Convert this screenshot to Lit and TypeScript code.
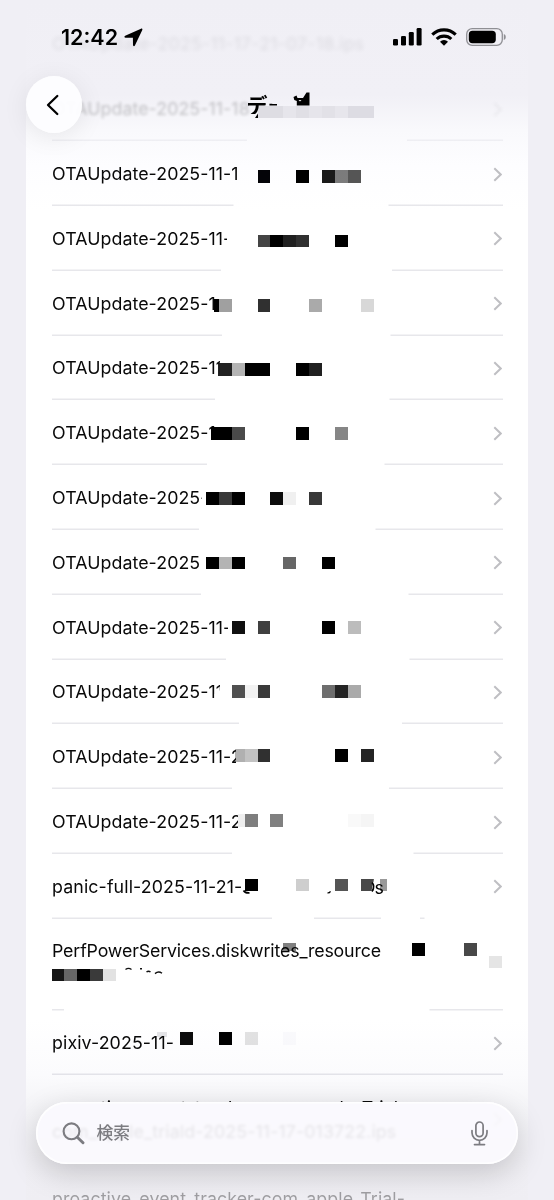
import { LitElement, html, svg, css } from "lit";
import { customElement, property } from "lit/decorators.js";

const CELL = 12.88;

type Tile = [col: number, y: number, color: string, x0?: number, h?: number, x1?: number];
interface Row {
  lines: string[];
  clip?: number;
  gaps?: [number, number][];
  tiles?: Tile[];
  extra?: unknown;
  state?: string;
  tracking?: number;
  chevron?: boolean;
}

const ota = (text: string, clip: number, gap: [number, number], y: number, tiles: [number, string, number?][]): Row => ({
  lines: [text],
  clip,
  gaps: [gap],
  tiles: tiles.map(([c, color, x0]) => [c, y, color, x0] as Tile),
});

const ROWS: Row[] = [
  { lines: ["OTAUpdate-2025-11-17-21-07-18.ips"], state: "ghost", chevron: false, tracking: 0.2 },
  { lines: ["OTAUpdate-2025-11-18"], state: "soft", clip: 250, gaps: [[247, 407]] },
  ota("OTAUpdate-2025-11-1", 242, [233.5, 388.5], 29, [[20, "#040408"], [23, "#000"], [25, "#1a1a1a"], [26, "#7c7c7c"], [27, "#555"]]),
  ota("OTAUpdate-2025-11-", 227, [221, 392], 28.6, [[20, "#444"], [21, "#000"], [22, "#202020"], [23, "#303030"], [26, "#000"]]),
  ota("OTAUpdate-2025-11", 215, [222, 390.5], 28.2, [[16, "#000", 213.5], [17, "#a0a0a0"], [20, "#303030"], [24, "#aaa"], [28, "#d8d8d8"]]),
  ota("OTAUpdate-2025-11", 220, [215, 389.5], 27.8, [[17, "#222", 218], [18, "#b4b4b4"], [19, "#000"], [20, "#000"], [23, "#000"], [24, "#202020"]]),
  ota("OTAUpdate-2025-1", 215, [207, 384.5], 27.4, [[16, "#000", 211.3], [17, "#000"], [18, "#4a4a4a"], [23, "#000"], [26, "#868686"]]),
  ota("OTAUpdate-2025-", 202, [199, 375.5], 27, [[16, "#000"], [17, "#383838"], [18, "#000"], [21, "#0c0c0c"], [22, "#f0f0f0"], [24, "#383838"]]),
  ota("OTAUpdate-2025", 199, [201, 408.5], 26.6, [[16, "#000"], [17, "#b4b4b4"], [18, "#000"], [22, "#666"], [25, "#000"]]),
  ota("OTAUpdate-2025-11-", 228, [226, 409.5], 26.2, [[18, "#101010"], [20, "#404040"], [25, "#000"], [27, "#bcbcbc"]]),
  {
    ...ota("OTAUpdate-2025-11", 220, [239, 402], 25.8, [[18, "#505050"], [19, "#f2f2f2"], [20, "#3a3a3a"], [25, "#6e6e6e"], [26, "#242424"], [27, "#aaa"]]),
    extra: svg`<path d="M217 31.500h5v11h-7.500v-7z" fill="#fff"/>`,
  },
  ota("OTAUpdate-2025-11-2", 236, [232, 389], 25.4, [[18, "#b0b0b0", 234.8], [19, "#c2c2c2"], [20, "#303030"], [26, "#000"], [28, "#242424"]]),
  ota("OTAUpdate-2025-11-2", 238, [232, 413.5], 25, [[18, "#eee", 237.5], [19, "#7e7e7e"], [21, "#808080"], [27, "#f9f9f9"], [28, "#f5f5f5"]]),
  {
    lines: ["panic-full-2025-11-21-"],
    tracking: 0.12,
    gaps: [[272, 314], [381, 420], [424.5, 503]],
    tiles: [[19, 24.5, "#000"], [23, 24.5, "#cecece"], [26, 24.5, "#555"], [28, 24.5, "#484848"], [29, 24.5, "#999", 380.2, 12.9, 386.5]],
    extra: svg`
      <path d="M243.500 36.500q1.800 2.800 6 2.400" fill="none" stroke="#000" stroke-width="1.700"/>
      <path d="M327.500 38.800q2 .2 3-1.500" fill="none" stroke="#000" stroke-width="1.300"/>
      <path d="M373.500 24.500l-2 13h2v-2q3.500-4 0-7.500z" fill="#fff"/>
      <path d="M372 28.500q3.400 3.500 0 9" fill="none" stroke="#000" stroke-width="1.700"/>
      <text x="374.500" y="39.600" class="bit">s</text>`,
  },
  {
    lines: ["PerfPowerServices.diskwrites_resource", ""],
    state: "raised",
    tracking: -0.155,
    chevron: false,
    gaps: [[64, 429.5]],
    tiles: [
      [22, 23.7, "#808080", 283.4, 8.2], [32, 23.7, "#000"], [36, 23.7, "#484848"], [38, 36.6, "#e5e5e5"],
      [4, 49.5, "#161616"], [5, 49.5, "#666"], [6, 49.5, "#000"], [7, 49.5, "#3a3a3a"], [8, 49.5, "#e2e2e2"],
    ],
    extra: svg`<path d="M125.500 50.500q3-2.300 6 0M140 49.700h2M146.500 52.900q2-1.200 4 0M155 54.600q3.500-3 7-.3" fill="none" stroke="#111" stroke-width="1.400"/>`,
  },
  {
    lines: ["pixiv-2025-11-"],
    tracking: 0.1,
    tiles: [[12, 22.4, "#e4e4e6", 157, 4.4], [14, 22.4, "#0c0c0c"], [17, 22.4, "#000"], [19, 22.4, "#e2e2e2"], [22, 22.4, "#fafafc"]],
  },
  { lines: ["proactive_event_tracker-com_apple_Trial-", "com_apple_triald-2025-11-17-013722.ips"], state: "under", tracking: 0.12 },
  { lines: ["proactive_event_tracker-com_apple_Trial-", ""], state: "tail", chevron: false, tracking: 0.08 },
];

@customElement("log-row")
class LogRow extends LitElement {
  @property({ attribute: false }) row!: Row;

  static styles = css`
    :host { display: block; position: relative; }
    .row { display: flex; align-items: center; min-height: 64.8px; box-sizing: border-box; padding: 1.400px 26.500px 0 26px; }
    .row.double { min-height: 91.4px; }
    .label { flex: 1; font-size: 17.800px; line-height: 24px; white-space: nowrap; color: #080808; }
    .line { height: 24px; overflow: hidden; }
    .chev { width: 9px; height: 15px; flex: none; }
    .overlay { position: absolute; left: -26px; top: 0; width: 554px; height: 100%; overflow: visible; pointer-events: none; }
    .overlay rect { mix-blend-mode: multiply; }
    .bit { font: 17.800px Inter, sans-serif; }
    .soft { filter: blur(1.700px); opacity: .22; }
    .ghost { filter: blur(2px); opacity: .085; }
    .row.raised { padding-top: 0; padding-bottom: 2px; }
    .row.under { padding-top: 0; padding-bottom: 1px; }
    .under .line:first-child { clip-path: inset(0 0 17px 0); }
    .row.tail { opacity: .34; padding-top: 0; padding-bottom: 2px; }
  `;

  render() {
    const r = this.row;
    const double = r.lines.length > 1;
    const h = double ? 91.4 : 64.8;
    // Separator pieces between the erased spans.
    const pieces: [number, number][] = [];
    let x = 52;
    for (const [a, b] of r.gaps ?? []) {
      pieces.push([x, a]);
      x = b;
    }
    pieces.push([x, 503]);
    const bare = r.state === "ghost" || r.state === "under";
    return html`
      <div class="row ${double ? "double" : ""} ${r.state ?? ""}">
        <div class="label" style="letter-spacing:${r.tracking ?? 0.07}px">
          ${r.lines.map((t) => html`<div class="line" style=${r.clip ? `width:${r.clip - 52}px` : ""}>${t}</div>`)}
        </div>
        ${r.chevron === false
          ? ""
          : html`<svg class="chev" viewBox="0 0 9 15"><path d="M1.300 1.300 7.700 7.500l-6.400 6.200" fill="none" stroke="#bfbfc3" stroke-width="2"/></svg>`}
      </div>
      <svg class="overlay">
        ${bare ? "" : pieces.map(([a, b]) => svg`<rect x=${a} y=${h - 1.2} width=${Math.max(0, b - a)} height="1.200" fill=${r.state === "soft" ? "#f0f0f3" : "#e2e2e6"}/>`)}
        ${(r.tiles ?? []).map(([c, y, color, x0, th, x1]) => {
          const left = x0 ?? c * CELL;
          return svg`<rect x=${left} y=${y} width=${(x1 ?? (c + 1) * CELL) - left} height=${th ?? CELL} fill=${color} shape-rendering="crispEdges"/>`;
        })}
        ${r.extra ?? ""}
      </svg>
    `;
  }
}

@customElement("app-root")
class AppRoot extends LitElement {
  static styles = css`
    :host { display: block; width: 554px; height: 1200px; position: relative; overflow: hidden; background: #f0eff5; font-family: Inter, "Noto Sans CJK JP", sans-serif; color: #000; }
    .card { margin: 0 26px; padding-top: 11.4px; background: linear-gradient(#f0eff5 0, #f1f0f6 95px, #f9f9fc 130px, #fdfdff 165px, #fff 210px, #fff 1020px, #fbfbfd 1075px, #f4f4f7 1110px, #f0eff4 1160px, #efeef3 1200px); }
    .top { position: absolute; inset: 0 0 auto 0; }
    .status { display: flex; height: 74px; box-sizing: border-box; align-items: center; justify-content: space-between; padding: 0 48.500px 0 61px; }
    .time { display: flex; align-items: center; gap: 6px; font-weight: 600; font-size: 21.500px; letter-spacing: 0; }
    .signals { display: flex; align-items: center; gap: 9px; }
    .nav { display: flex; height: 61px; align-items: center; padding-left: 26px; }
    .back { width: 56px; height: 57px; border-radius: 50%; background: rgba(253, 253, 255, .96); box-shadow: 0 4px 26px rgba(0, 0, 0, .08), inset 0 0 2px #fff; display: grid; place-items: center; }
    .back svg { margin-right: 3px; }
    .title { margin-left: 165px; width: 130px; height: 30px; overflow: visible; }
    .title-text { font: 700 21px "Noto Sans CJK JP", sans-serif; }
    .search { position: absolute; left: 36px; right: 36px; bottom: 36px; height: 62px; box-sizing: border-box; padding: 0 29px 0 25.500px; display: flex; align-items: center; border-radius: 31px; background: rgba(251, 250, 254, .91); backdrop-filter: blur(1.500px); box-shadow: 0 9px 30px rgba(0, 0, 0, .18), inset 0 0 0 1.500px rgba(255, 255, 255, .85); }
    .hint { flex: 1; margin-left: 12px; font: 500 16.800px "Noto Sans CJK JP", sans-serif; color: #7c7c81; padding-bottom: 3px; }
  `;

  render() {
    return html`
      <main class="card">${ROWS.map((r) => html`<log-row .row=${r}></log-row>`)}</main>
      <header class="top">
        <div class="status">
          <div class="time">
            <span>12:42</span>
            <svg width="19" height="19" viewBox="0 0 19 19"><path d="M17 .7 1.200 7.800c-1.200.6-.9 1.900.4 1.900l7.300.1.1 7.300c0 1.300 1.400 1.600 1.900.4L18.300 2C18.700 1 18 .3 17 .7z"/></svg>
          </div>
          <div class="signals">
            <svg width="29" height="18" viewBox="0 0 29 18"><rect x="0" y="11" width="5" height="6.500" rx="1.300"/><rect x="8" y="8" width="5" height="9.500" rx="1.300"/><rect x="15.800" y="4" width="5" height="13.500" rx="1.300"/><rect x="23.600" y="0" width="5" height="17.500" rx="1.300"/></svg>
            <svg width="26" height="18" viewBox="0 0 26 18"><g fill="none" stroke="#000" stroke-width="3.100"><path d="M1.300 6.600a16.800 16.800 0 0 1 23.400 0"/><path d="M5.700 11a10.600 10.600 0 0 1 14.600 0"/></g><path d="M13 17.700 9 13.700a5.800 5.800 0 0 1 8 0z"/></svg>
            <svg width="40" height="18" viewBox="0 0 40 18"><rect x=".7" y=".7" width="35.600" height="16.600" rx="5.500" fill="none" stroke="#8f8f94" stroke-width="1.300"/><rect x="2.800" y="2.800" width="27" height="12.400" rx="3.700"/><path d="M37.800 6v6q2-.6 2-3t-2-3z" fill="#8f8f94"/></svg>
          </div>
        </div>
        <div class="nav">
          <div class="back"><svg width="14" height="22" viewBox="0 0 14 22"><path d="M11.300 2 2 11l9.300 9" fill="none" stroke="#000" stroke-width="2.300" stroke-linecap="round" stroke-linejoin="round"/></svg></div>
          <svg class="title" viewBox="247 90 130 30">
            ${["#dedde3", "#dedde3", "#e6e5eb", "#e0dfe5", "#e6e5eb", "#e2e1e7", "#e7e6ec", "#dddce3", "#dddce3"].map(
              (c, i) => svg`<rect x=${(20 + i) * CELL} y="105.500" width=${CELL} height="12.900" fill=${c} shape-rendering="crispEdges"/>`,
            )}
            <clipPath id="cut"><path d="M246 90h31v15.500h-12L258 114h-12z"/></clipPath>
            <text x="246.500" y="113" class="title-text" clip-path="url(#cut)">デー</text>
            <path d="M255 118l3-4.500v4.500z"/>
            <path d="M293.500 97l3-1.500 1 2.500h5.500l3.500-5.500h3v13h-12.700v-4.500l-2.500-1z"/>
            <path d="M298.500 100h3l-1.500 1.500z" fill="#eee"/>
          </svg>
        </div>
      </header>
      <div class="search">
        <svg width="23" height="23" viewBox="0 0 23 23"><circle cx="9.500" cy="9.300" r="7.900" fill="none" stroke="#7c7c81" stroke-width="2.100"/><path d="M15.300 15.200 21 20.800" stroke="#7c7c81" stroke-width="2.900" stroke-linecap="round"/></svg>
        <span class="hint">検索</span>
        <svg width="19" height="25" viewBox="0 0 19 25"><g fill="none" stroke="#7c7c81" stroke-width="1.700" stroke-linecap="round"><rect x="5.900" y="1" width="7.200" height="14.600" rx="3.600"/><path d="M2 9.500v2.300a7.500 7.500 0 0 0 15 0V9.500M9.500 19.400v4M4.500 23.600h10"/></g></svg>
      </div>
    `;
  }
}
